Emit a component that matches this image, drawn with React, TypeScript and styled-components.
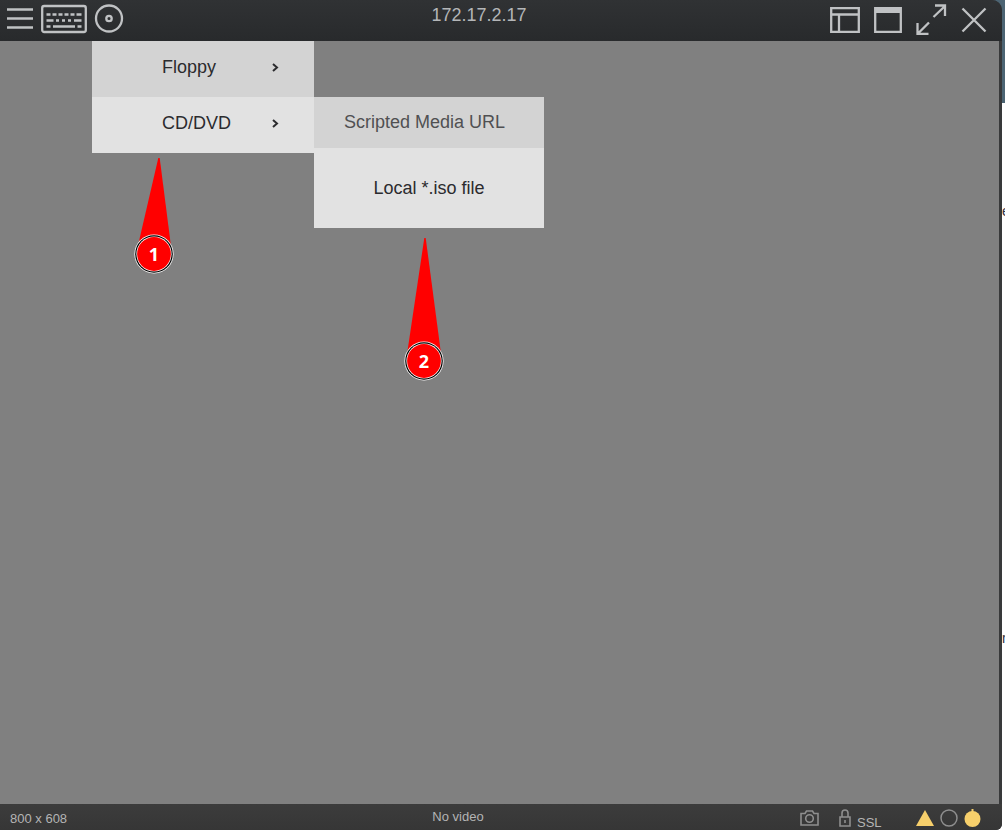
import React from "react";
import styled, { createGlobalStyle } from "styled-components";

const GlobalStyle = createGlobalStyle`
  * { box-sizing: border-box; }
  body { margin: 0; font-family: "Liberation Sans", Arial, sans-serif; }
  ul { margin: 0; padding: 0; list-style: none; }
`;

const Desktop = styled.div`
  display: flex;
  min-height: 100vh;
  background: linear-gradient(#4c6473 0, #4c6473 103px, #ffffff 103px);
`;

const ConsoleWindow = styled.div`
  flex: 1;
  min-width: 0;
  display: flex;
  flex-direction: column;
  background: #38393a;
  border-radius: 0 10px 6px 0;
  overflow: hidden;
`;

const BackgroundPage = styled.div`
  position: relative;
  width: 3px;
  overflow: hidden;
`;

const PageText = styled.span<{ $top: number }>`
  position: absolute;
  left: 0;
  top: ${(p) => p.$top}px;
  font-size: 14px;
  line-height: 16px;
  color: #333344;
`;

const TitleBar = styled.header`
  display: flex;
  height: 41px;
  background: linear-gradient(#303234, #282a2c);
  color: #c0c2c4;
`;

const ToolGroup = styled.div`
  display: flex;
  align-items: center;
  gap: 7px;
  padding: 0 4px 4px 6px;
`;

const WindowControls = styled(ToolGroup)`
  gap: 14px;
  padding: 0 13px 4px 0;
`;

const Title = styled.h1`
  flex: 1;
  margin: 0;
  font-size: 18px;
  line-height: 30px;
  font-weight: 400;
  text-align: center;
  color: #b4b6b8;
`;

const IconButton = styled.button`
  display: flex;
  padding: 0;
  border: 0;
  background: none;
  color: inherit;
`;

const Icon = styled.svg`
  display: block;
  fill: none;
  stroke: currentColor;
  stroke-width: 2.3;
`;

const Screen = styled.main`
  position: relative;
  flex: 1;
  margin-right: 3px;
  background: #808080;
`;

const Menu = styled.ul`
  position: absolute;
  left: 92px;
  top: 0;
  width: 222px;
`;

const SubMenu = styled.ul`
  position: absolute;
  left: 100%;
  top: 0;
  width: 230px;
`;

const MenuEntry = styled.li`
  position: relative;
`;

const MenuButton = styled.button<{ $shade: "dark" | "light" }>`
  display: flex;
  align-items: center;
  justify-content: space-between;
  width: 100%;
  height: 56px;
  padding: 0 35px 3px 70px;
  border: 0;
  background: ${(p) => (p.$shade === "dark" ? "#d3d3d3" : "#e2e2e2")};
  font: 18px "Liberation Sans", Arial, sans-serif;
  color: #2b2b2e;
`;

const SubMenuButton = styled(MenuButton)<{ $muted?: boolean }>`
  height: ${(p) => (p.$muted ? 51 : 80)}px;
  padding: ${(p) => (p.$muted ? "0 0 0 30px" : "0")};
  justify-content: ${(p) => (p.$muted ? "flex-start" : "center")};
  color: ${(p) => (p.$muted ? "#505052" : "#2b2b2e")};
`;

const Marker = styled.div<{ $left: number; $top: number }>`
  position: absolute;
  left: ${(p) => p.$left}px;
  top: ${(p) => p.$top}px;
`;

const StatusBar = styled.footer`
  display: flex;
  height: 26px;
  background: linear-gradient(#3c3c3c, #363636);
  color: #b4b4b4;
  font-size: 13px;
  line-height: 30px;
`;

const Resolution = styled.span`
  width: 116px;
  padding-left: 10px;
`;

const VideoState = styled.span`
  flex: 1;
  line-height: 26px;
  text-align: center;
`;

const Indicators = styled.div`
  display: flex;
  align-items: center;
  padding: 2px 21px 0 0;
`;

const Ssl = styled.span`
  width: 65px;
  padding: 10px 0 0 6px;
  line-height: 14px;
`;

const StatusIcon = styled(Icon)`
  color: #8e8e8e;
  stroke-width: 1.6;
`;

const CameraIcon = styled(StatusIcon)`
  margin-right: 20px;
`;

const Lights = styled.div`
  display: flex;
  align-items: center;
  gap: 6px;
`;

function Chevron() {
  return (
    <Icon width="8" height="10" viewBox="0 0 8 10">
      <path d="M2 1 6 4.500 2 8" strokeWidth="2" />
    </Icon>
  );
}

type CalloutProps = { label: string; left: number; top: number; tip: number; height: number; feet: [number, number] };

function Callout({ label, left, top, tip, height, feet }: CalloutProps) {
  const cy = height - 20;
  return (
    <Marker $left={left} $top={top}>
      <svg width="40" height={height} viewBox={`0 0 40 ${height}`} display="block">
        <path d={`M${tip - 0.7} 0h1.4L${feet[1]} ${cy}H${feet[0]}Z`} fill="#ff0000" />
        <circle cx="20" cy={cy} r="19.6" fill="#ffffff" />
        <circle cx="20" cy={cy} r="18.8" fill="#000000" />
        <circle cx="20" cy={cy} r="17.6" fill="#ffffff" />
        <circle cx="20" cy={cy} r="16.9" fill="#ff0000" />
        <text x="20" y={cy + 7} textAnchor="middle" fontFamily="Open Sans, sans-serif" fontWeight="700" fontSize="18" fill="#ffffff">
          {label}
        </text>
      </svg>
    </Marker>
  );
}

export default function App() {
  return (
    <Desktop>
      <GlobalStyle />
      <ConsoleWindow>
        <TitleBar>
          <ToolGroup>
            <IconButton aria-label="Menu">
              <Icon width="28" height="30" viewBox="0 0 28 30">
                <path d="M1 5.500h26M1 14.500h26M1 23.500h26" />
              </Icon>
            </IconButton>
            <IconButton aria-label="Keyboard">
              <Icon width="46" height="30" viewBox="0 0 46 30">
                <rect x="1.200" y="2" width="43.600" height="26" rx="2" />
                <path d="M5.500 10.500h4M11.500 10.500h4M17.500 10.500h4M23.500 10.500h4M29.500 10.500h4M35.500 10.500h5M5.500 16.500h7M15 16.500h3M21 16.500h3M27 16.500h3M33 16.500h7.500M5.500 22.500h4M12 22.500h22M36.500 22.500h4" />
              </Icon>
            </IconButton>
            <IconButton aria-label="Virtual media">
              <Icon width="30" height="30" viewBox="0 0 30 30">
                <circle cx="15" cy="14.500" r="13" />
                <circle cx="15" cy="14.500" r="2.700" />
              </Icon>
            </IconButton>
          </ToolGroup>
          <Title>172.17.2.17</Title>
          <WindowControls>
            <IconButton aria-label="Layout">
              <Icon width="30" height="30" viewBox="0 0 30 30">
                <path d="M1.200 4.200h27.600v23.600H1.200zM1 10.500h28M9 10.500V28" />
              </Icon>
            </IconButton>
            <IconButton aria-label="Window">
              <Icon width="28" height="30" viewBox="0 0 28 30">
                <path d="M1.200 4.200h25.600v23.600H1.200z" />
                <path d="M1 6.500h26" strokeWidth="5" />
              </Icon>
            </IconButton>
            <IconButton aria-label="Full screen">
              <Icon width="31" height="32" viewBox="0 0 31 32">
                <path d="M17.500 14 29 3M19 2.500H29V13M13 19.500 2 30.500M1.500 20V31H12.500" />
              </Icon>
            </IconButton>
            <IconButton aria-label="Close">
              <Icon width="28" height="30" viewBox="0 0 28 30">
                <path d="M1.500 4.500 24.500 27.500M24.500 4.500 1.500 27.500" />
              </Icon>
            </IconButton>
          </WindowControls>
        </TitleBar>
        <Screen>
          <Menu>
            <MenuEntry>
              <MenuButton $shade="dark">Floppy<Chevron /></MenuButton>
            </MenuEntry>
            <MenuEntry>
              <MenuButton $shade="light">CD/DVD<Chevron /></MenuButton>
              <SubMenu>
                <li><SubMenuButton $shade="dark" $muted>Scripted Media URL</SubMenuButton></li>
                <li><SubMenuButton $shade="light">Local *.iso file</SubMenuButton></li>
              </SubMenu>
            </MenuEntry>
          </Menu>
          <Callout label="1" left={134} top={117} tip={25} height={116} feet={[2, 38]} />
          <Callout label="2" left={404} top={197} tip={21} height={143} feet={[2, 38]} />
        </Screen>
        <StatusBar>
          <Resolution>800 x 608</Resolution>
          <VideoState>No video</VideoState>
          <Indicators>
            <CameraIcon width="19" height="18" viewBox="0 0 19 18">
              <path d="M1 4.500h4l1.500-2.500h6L14 4.500h4V16H1z" />
              <circle cx="9.500" cy="9.500" r="3.800" />
            </CameraIcon>
            <StatusIcon width="12" height="18" viewBox="0 0 12 18">
              <path d="M1 8h10v9H1zM3 8V4a3 3 0 0 1 6 0v4M6 11v3" />
            </StatusIcon>
            <Ssl>SSL</Ssl>
            <Lights>
              <svg width="18" height="16" viewBox="0 0 18 16"><path d="M9 0 18 16H0z" fill="#f6cf6b" /></svg>
              <svg width="18" height="18" viewBox="0 0 18 18"><circle cx="9" cy="9" r="8" fill="none" stroke="#8e8e8e" strokeWidth="1.500" /></svg>
              <svg width="17" height="18" viewBox="0 0 17 18"><path d="M7.500 0h2v3h-2z" fill="#f6cf6b" /><circle cx="8.500" cy="10" r="8" fill="#f6cf6b" /></svg>
            </Lights>
          </Indicators>
        </StatusBar>
      </ConsoleWindow>
      <BackgroundPage>
        <PageText $top={203}>e</PageText>
        <PageText $top={630}>r</PageText>
      </BackgroundPage>
    </Desktop>
  );
}
